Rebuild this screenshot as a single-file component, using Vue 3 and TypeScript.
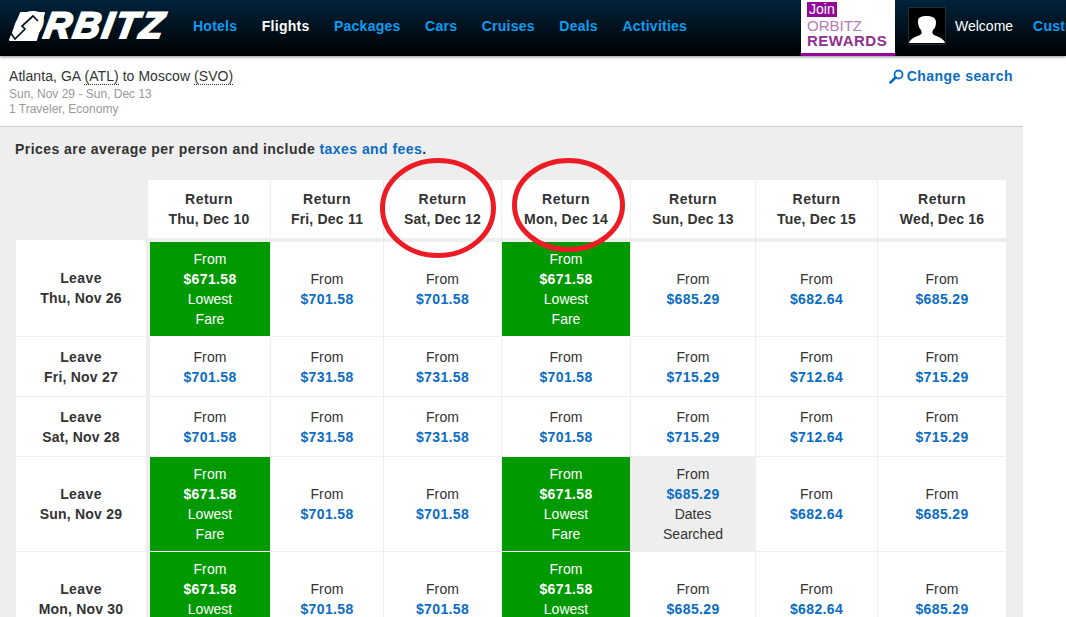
<script setup lang="ts">
type Kind = 'normal' | 'low' | 'searched'
interface Cell { price: string; kind: Kind }

const nav = ['Hotels', 'Flights', 'Packages', 'Cars', 'Cruises', 'Deals', 'Activities']
const returns = ['Thu, Dec 10', 'Fri, Dec 11', 'Sat, Dec 12', 'Mon, Dec 14', 'Sun, Dec 13', 'Tue, Dec 15', 'Wed, Dec 16']

const c = (price: string, kind: Kind = 'normal'): Cell => ({ price, kind })
const lowRow = (): Cell[] => [
  c('$671.58', 'low'), c('$701.58'), c('$701.58'), c('$671.58', 'low'), c('$685.29'), c('$682.64'), c('$685.29'),
]
const midRow = (): Cell[] => [
  c('$701.58'), c('$731.58'), c('$731.58'), c('$701.58'), c('$715.29'), c('$712.64'), c('$715.29'),
]
const searchedRow = (): Cell[] => [
  c('$671.58', 'low'), c('$701.58'), c('$701.58'), c('$671.58', 'low'), c('$685.29', 'searched'), c('$682.64'), c('$685.29'),
]
const rows = [
  { leave: 'Thu, Nov 26', cells: lowRow() },
  { leave: 'Fri, Nov 27', cells: midRow() },
  { leave: 'Sat, Nov 28', cells: midRow() },
  { leave: 'Sun, Nov 29', cells: searchedRow() },
  { leave: 'Mon, Nov 30', cells: lowRow() },
]
</script>

<template>
  <div class="page">
    <header class="top">
      <div class="logo">
        <span class="logo-text">ORBITZ</span>
        <svg class="logo-arrow" width="44" height="36" viewBox="0 0 44 36">
          <path d="M12 4 L35 4 L27 31 L1 31 Z" fill="#fff" stroke="#fff" stroke-width="2" stroke-linejoin="round" />
          <path d="M1 23 L6 30 L16 20 L13 17 L24 7 L29 12" fill="none" stroke="#03131f" stroke-width="1.7" />
        </svg>
      </div>
      <nav class="nav">
        <a v-for="item in nav" :key="item" :class="{ active: item === 'Flights' }">{{ item }}</a>
      </nav>
      <div class="rewards">
        <span class="join">Join</span>
        <span class="rw-orbitz">ORBITZ</span>
        <span class="rw-rewards">REWARDS</span>
      </div>
      <div class="avatar">
        <svg width="36" height="36" viewBox="0 0 36 36">
          <path d="M0 35 C1 31 6 29 11 27 C13 26 13 24 12 22 C9 19 9 14 9 13 C9 9 13 8 18 8 C23 8 27 10 27 14 C27 18 26 20 24 22 C23 24 23 26 25 27 C30 29 35 31 36 35 Z" fill="#fff" />
        </svg>
      </div>
      <span class="welcome">Welcome</span>
      <a class="cust">Customer Service</a>
    </header>

    <section class="summary">
      <div>
        <div class="route">Atlanta, GA <abbr>(ATL)</abbr> to Moscow <abbr>(SVO)</abbr></div>
        <div class="sub">Sun, Nov 29 - Sun, Dec 13</div>
        <div class="sub">1 Traveler, Economy</div>
      </div>
      <a class="change">
        <svg width="15" height="15" viewBox="0 0 15 15">
          <circle cx="9.5" cy="5.5" r="4" fill="none" stroke="#0b6cc4" stroke-width="1.8" />
          <path d="M6.5 8.5 L1.5 13.5" stroke="#0b6cc4" stroke-width="2.6" stroke-linecap="round" />
        </svg>
        Change search
      </a>
    </section>

    <main class="panel">
      <p class="note">Prices are average per person and include <a>taxes and fees</a>.</p>
      <div class="row head">
        <div class="blank"></div>
        <div v-for="r in returns" :key="r" class="hcell">
          <span>Return</span>
          <span class="date">{{ r }}</span>
        </div>
      </div>
      <div v-for="(row, i) in rows" :key="row.leave" class="row body" :class="{ first: i === 0 }">
        <div class="cell left">
          <span>Leave</span>
          <span class="date">{{ row.leave }}</span>
        </div>
        <div v-for="(cell, j) in row.cells" :key="j" class="cell" :class="cell.kind">
          <span class="from">From</span>
          <span class="price">{{ cell.price }}</span>
          <template v-if="cell.kind === 'low'">
            <span>Lowest</span>
            <span>Fare</span>
          </template>
          <template v-else-if="cell.kind === 'searched'">
            <span>Dates</span>
            <span>Searched</span>
          </template>
        </div>
      </div>
    </main>

    <svg class="marks" width="1066" height="617" viewBox="0 0 1066 617">
      <ellipse cx="438" cy="208" rx="55.5" ry="47.5" fill="none" stroke="#ed1c24" stroke-width="5" />
      <ellipse cx="568.5" cy="205" rx="54" ry="44.5" fill="none" stroke="#ed1c24" stroke-width="5" />
    </svg>
  </div>
</template>

<style scoped>
.page {
  position: relative;
  width: 1066px;
  height: 617px;
  overflow: hidden;
  background: #fff;
  font-family: "Liberation Sans", Arial, sans-serif;
  font-size: 14px;
  line-height: 20px;
  color: #333;
}
.top {
  position: relative;
  height: 56px;
  display: flex;
  align-items: center;
  background: linear-gradient(#00233b, #000);
  box-shadow: 0 1px 3px rgba(0, 0, 0, 0.45);
  white-space: nowrap;
}
.logo {
  position: relative;
  width: 193px;
  flex: none;
  height: 56px;
}
.logo-text {
  position: absolute;
  left: 10px;
  top: 6px;
  font-size: 37px;
  line-height: 40px;
  font-weight: 700;
  font-style: italic;
  letter-spacing: 2.4px;
  color: #fff;
  -webkit-text-stroke: 2.2px #fff;
  transform: skewX(-10deg);
  transform-origin: 0 100%;
}
.logo-arrow {
  position: absolute;
  left: 9px;
  top: 9px;
}
.nav {
  display: flex;
  gap: 24.5px;
  width: 608px;
  flex: none;
  font-weight: 700;
  letter-spacing: 0.25px;
  margin-bottom: 4px;
}
.nav a { color: #0a9df0; }
.nav a.active { color: #fff; }
.rewards {
  width: 94px;
  height: 56px;
  flex: none;
  box-sizing: border-box;
  background: #fff;
  border-bottom: 3px solid #92089a;
  padding: 2px 0 0 6px;
  display: flex;
  flex-direction: column;
  align-items: flex-start;
}
.join {
  background: #92089a;
  color: #fff;
  font-size: 14px;
  line-height: 15px;
  padding: 0 2px;
}
.rw-orbitz {
  font-size: 15px;
  line-height: 16px;
  margin-top: 1px;
  color: #b37dbb;
}
.rw-rewards {
  font-size: 15px;
  line-height: 13px;
  font-weight: 700;
  letter-spacing: 0.5px;
  color: #8f2f90;
}
.avatar {
  width: 38px;
  height: 38px;
  box-sizing: border-box;
  flex: none;
  margin: 0 0 4px 13px;
  border: 1px solid #1f2e38;
  overflow: hidden;
  background: #000;
}
.welcome {
  margin: 0 0 4px 9px;
  color: #fff;
  flex: none;
}
.cust {
  margin: 0 0 4px 20px;
  color: #0a9df0;
  font-weight: 700;
  letter-spacing: 0.25px;
  flex: none;
}
.summary {
  width: 1023px;
  height: 71px;
  box-sizing: border-box;
  padding: 10px 10px 0 9px;
  border-bottom: 1px solid #ccc;
  display: flex;
  justify-content: space-between;
  align-items: flex-start;
}
.route {
  color: #333;
  letter-spacing: 0.06px;
  margin-bottom: 1px;
}
abbr { border-bottom: 1px dotted #333; }
.sub {
  font-size: 12px;
  line-height: 15px;
  color: #999;
}
.change {
  display: flex;
  align-items: center;
  gap: 3px;
  font-weight: 700;
  letter-spacing: 0.45px;
  color: #0b6cc4;
}
.panel {
  width: 1023px;
  height: 490px;
  box-sizing: border-box;
  background: #eee;
  padding: 12px 17px 0 16px;
}
.note {
  margin: 0 0 21px -1px;
  font-weight: 700;
  letter-spacing: 0.45px;
}
.note a { color: #0b6cc4; }
.row {
  display: grid;
}
.head {
  grid-template-columns: 132px 123px 113px 118px 129px 125px 122px 128px;
  margin-bottom: 2px;
}
.body {
  grid-template-columns: 134px 121px 113px 118px 129px 125px 122px 128px;
}
.hcell {
  height: 58px;
  box-sizing: border-box;
  background: #fff;
  border-right: 1px solid #eee;
  display: flex;
  flex-direction: column;
  justify-content: center;
  align-items: center;
  font-weight: 700;
  letter-spacing: 0.45px;
}
.hcell:last-child { border-right: 0; }
.hcell .date, .left .date { letter-spacing: 0.2px; }
.cell {
  box-sizing: border-box;
  min-height: 60px;
  padding: 7px 0;
  background: #fff;
  border-right: 1px solid #eee;
  border-bottom: 1px solid #eee;
  display: flex;
  flex-direction: column;
  justify-content: center;
  align-items: center;
}
.cell:last-child { border-right: 0; }
.first .cell:not(.left) { border-top: 2px solid #eee; }
.left {
  border-right-width: 4px;
  font-weight: 700;
  letter-spacing: 0.4px;
}
.from { letter-spacing: 0.1px; }
.price {
  font-weight: 700;
  letter-spacing: 0.35px;
  color: #0b6cc4;
}
.low {
  background: #090;
  color: #fff;
  border-bottom-color: #fff;
}
.low .price { color: #fff; }
.searched { background: #eee; }
.marks {
  position: absolute;
  left: 0;
  top: 0;
  pointer-events: none;
}
</style>

<style>
html, body { margin: 0; overflow: hidden; }
</style>
